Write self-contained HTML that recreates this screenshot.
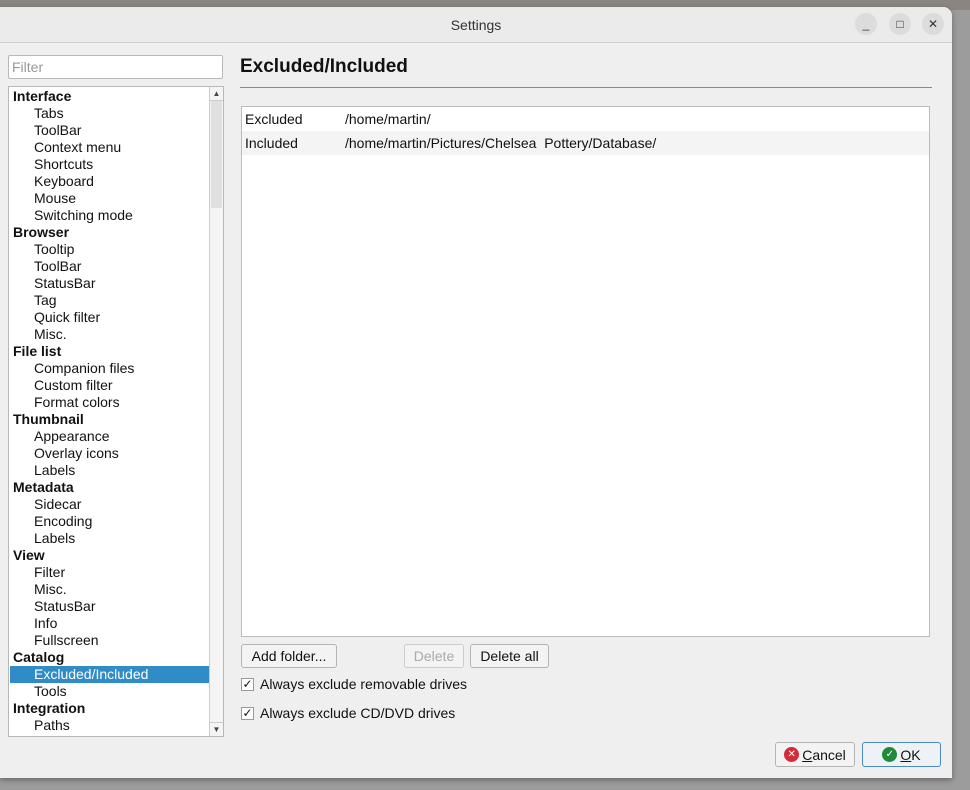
<!DOCTYPE html>
<html><head><meta charset="utf-8"><style>
*{box-sizing:border-box;margin:0;padding:0}
body{width:970px;height:790px;background:#9c9c9c;font-family:"Liberation Sans",sans-serif;font-size:14px;color:#111;position:relative;overflow:hidden}
.topbg{position:absolute;left:0;top:0;width:970px;height:10px;background:#8a8580}
.win{position:absolute;left:0;top:7px;width:952px;height:771px;background:#efefef;border-radius:0 9px 0 0;box-shadow:0 2px 6px rgba(0,0,0,.35)}
.title{height:36px;background:#ebebeb;border-bottom:1px solid #cfcfcf;border-radius:0 9px 0 0;text-align:center;line-height:36px;font-size:14px;color:#333}
.wb{position:absolute;top:6px;width:22px;height:22px;border-radius:50%;background:#dcdcdc;text-align:center;line-height:22px;font-size:12px;color:#333}
.a{position:absolute}
.filter{left:8px;top:48px;width:215px;height:24px;background:#fff;border:1px solid #b8b8b8;border-radius:2px;color:#999;padding-left:3px;line-height:22px}
.tree{left:8px;top:79px;width:216px;height:651px;background:#fff;border:1px solid #b8b8b8}
.row{position:absolute;left:1px;height:17px;line-height:17px;width:200px;white-space:nowrap}
.b{font-weight:bold;padding-left:3px}
.c{padding-left:24px}
.sel{background:#308cc6;color:#fff}
.sb{position:absolute;right:0;top:0;width:14px;height:649px;border-left:1px solid #ccc;background:#f4f4f4}
.h1{left:240px;top:49px;font-size:19px;font-weight:bold}
.hr{left:240px;top:80px;width:692px;height:1px;background:#888}
.list{left:241px;top:99px;width:689px;height:531px;background:#fff;border:1px solid #bbb}
.lr{position:absolute;left:0;width:687px;height:24px;line-height:24px}
.btn{position:absolute;height:24px;border:1px solid #b4b4b4;border-radius:3px;background:#f3f3f3;text-align:center;line-height:22px}
.cb{position:absolute;left:241px;width:13px;height:13px;border:1px solid #999;background:#fff;font-size:12px;line-height:11px;text-align:center}
.ic{display:inline-block;width:15px;height:15px;border-radius:50%;color:#fff;font-size:10px;line-height:15px;text-align:center;margin-right:3px}
.bi{display:flex;align-items:center;justify-content:center}
</style></head><body>
<div class="topbg"></div>
<div class="win">
<div class="title">Settings</div>
<div class="wb" style="left:855px">_</div>
<div class="wb" style="left:889px">□</div>
<div class="wb" style="left:922px">✕</div>
<div class="a filter">Filter</div>
<div class="a tree">
<div class="row b" style="top:1px">Interface</div>
<div class="row c" style="top:18px">Tabs</div>
<div class="row c" style="top:35px">ToolBar</div>
<div class="row c" style="top:52px">Context menu</div>
<div class="row c" style="top:69px">Shortcuts</div>
<div class="row c" style="top:86px">Keyboard</div>
<div class="row c" style="top:103px">Mouse</div>
<div class="row c" style="top:120px">Switching mode</div>
<div class="row b" style="top:137px">Browser</div>
<div class="row c" style="top:154px">Tooltip</div>
<div class="row c" style="top:171px">ToolBar</div>
<div class="row c" style="top:188px">StatusBar</div>
<div class="row c" style="top:205px">Tag</div>
<div class="row c" style="top:222px">Quick filter</div>
<div class="row c" style="top:239px">Misc.</div>
<div class="row b" style="top:256px">File list</div>
<div class="row c" style="top:273px">Companion files</div>
<div class="row c" style="top:290px">Custom filter</div>
<div class="row c" style="top:307px">Format colors</div>
<div class="row b" style="top:324px">Thumbnail</div>
<div class="row c" style="top:341px">Appearance</div>
<div class="row c" style="top:358px">Overlay icons</div>
<div class="row c" style="top:375px">Labels</div>
<div class="row b" style="top:392px">Metadata</div>
<div class="row c" style="top:409px">Sidecar</div>
<div class="row c" style="top:426px">Encoding</div>
<div class="row c" style="top:443px">Labels</div>
<div class="row b" style="top:460px">View</div>
<div class="row c" style="top:477px">Filter</div>
<div class="row c" style="top:494px">Misc.</div>
<div class="row c" style="top:511px">StatusBar</div>
<div class="row c" style="top:528px">Info</div>
<div class="row c" style="top:545px">Fullscreen</div>
<div class="row b" style="top:562px">Catalog</div>
<div class="row c sel" style="top:579px">Excluded/Included</div>
<div class="row c" style="top:596px">Tools</div>
<div class="row b" style="top:613px">Integration</div>
<div class="row c" style="top:630px">Paths</div>
<div class="sb">
<div style="height:14px;text-align:center;font-size:8px;line-height:14px;color:#444;border-bottom:1px solid #ccc">▲</div>
<div style="margin:0 1px;height:107px;background:#e0e0e0"></div>
<div style="position:absolute;bottom:0;width:13px;height:14px;text-align:center;font-size:8px;line-height:14px;color:#444;border-top:1px solid #ccc">▼</div>
</div>
</div>
<div class="a h1">Excluded/Included</div>
<div class="a hr"></div>
<div class="a list">
<div class="lr" style="top:0"><span style="position:absolute;left:3px">Excluded</span><span style="position:absolute;left:103px">/home/martin/</span></div>
<div class="lr" style="top:24px;background:#f4f4f4"><span style="position:absolute;left:3px">Included</span><span style="position:absolute;left:103px">/home/martin/Pictures/Chelsea&nbsp; Pottery/Database/</span></div>
</div>
<div class="btn" style="left:241px;top:637px;width:96px">Add folder...</div>
<div class="btn" style="left:404px;top:637px;width:60px;color:#aaa;border-color:#ccc">Delete</div>
<div class="btn" style="left:470px;top:637px;width:79px">Delete all</div>
<div class="cb" style="top:671px">✓</div>
<div class="a" style="left:260px;top:669px">Always exclude removable drives</div>
<div class="cb" style="top:700px">✓</div>
<div class="a" style="left:260px;top:698px">Always exclude CD/DVD drives</div>
<div class="btn bi" style="left:775px;top:735px;width:80px;height:25px"><span class="ic" style="background:#d42a3a">✕</span><span><u>C</u>ancel</span></div>
<div class="btn bi" style="left:862px;top:735px;width:79px;height:25px;border-color:#4a8ac0;background:#eef2f6"><span class="ic" style="background:#1f8a3a">✓</span><span><u>O</u>K</span></div>
</div>
</body></html>
